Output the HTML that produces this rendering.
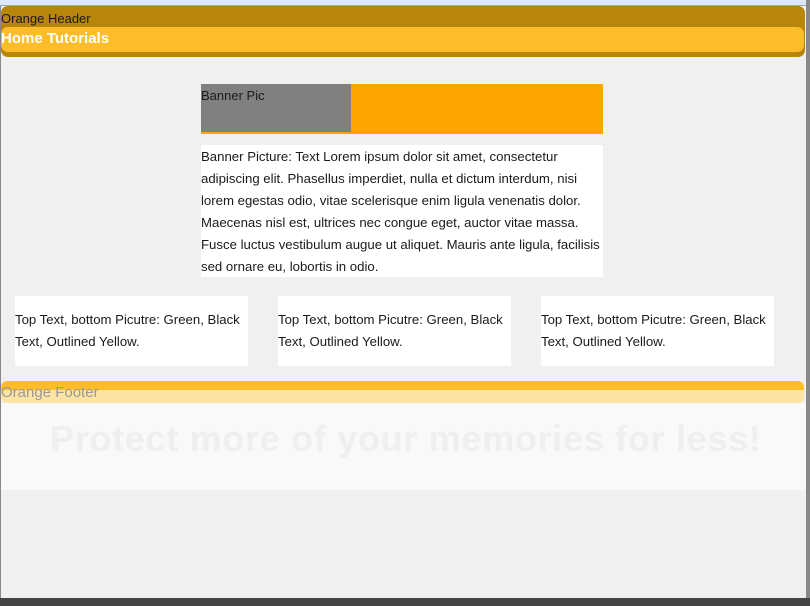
<!DOCTYPE html>
<html><head><style>
*{margin:0;padding:0;box-sizing:border-box}
body{width:810px;height:606px;background:#f0f0f0;font-family:"Liberation Sans",Arial,sans-serif;color:#1a1a1a;position:relative;overflow:hidden}
.a{position:absolute}
.p{font-size:13.2px;line-height:22px;background:#fff}
</style></head><body>
<div class="a" style="left:0;top:0;width:810px;height:5px;background:#dbe9f8"></div>
<div class="a" style="left:0;top:5px;width:806px;height:1px;background:#9aa"></div>
<div class="a" style="left:806px;top:0;width:4px;height:606px;background:#888"></div>
<div class="a" style="left:0;top:598px;width:810px;height:8px;background:#444"></div>
<div class="a" style="left:0;top:6px;width:1px;height:592px;background:#888"></div>

<div class="a" style="left:1px;top:6px;width:804px;height:51px;background:#b8860b;border-radius:7px"></div>
<div class="a" style="left:1px;top:11px;font-size:13px;color:#1a1a1a">Orange Header</div>
<div class="a" style="left:1px;top:27px;width:803px;height:25px;background:#fdbd2a;border-radius:7px"></div>
<div class="a" style="left:1px;top:30px;font-size:15px;font-weight:bold;color:#fff">Home Tutorials</div>

<div class="a" style="left:201px;top:84px;width:402px;height:50px;background:#ffa500"></div>
<div class="a" style="left:201px;top:84px;width:150px;height:48px;background:#808080;font-size:13px;padding-top:4px">Banner Pic</div>

<div class="a p" style="left:201px;top:145px;width:402px;height:132px;padding-top:1px">Banner Picture: Text Lorem ipsum dolor sit amet, consectetur adipiscing elit. Phasellus imperdiet, nulla et dictum interdum, nisi lorem egestas odio, vitae scelerisque enim ligula venenatis dolor. Maecenas nisl est, ultrices nec congue eget, auctor vitae massa. Fusce luctus vestibulum augue ut aliquet. Mauris ante ligula, facilisis sed ornare eu, lobortis in odio.</div>

<div class="a p" style="left:15px;top:296px;width:233px;height:70px;padding-top:13px">Top Text, bottom Picutre: Green, Black Text, Outlined Yellow.</div>
<div class="a p" style="left:278px;top:296px;width:233px;height:70px;padding-top:13px">Top Text, bottom Picutre: Green, Black Text, Outlined Yellow.</div>
<div class="a p" style="left:541px;top:296px;width:233px;height:70px;padding-top:13px">Top Text, bottom Picutre: Green, Black Text, Outlined Yellow.</div>

<div class="a" style="left:1px;top:381px;width:803px;height:22px;background:#fde4a4;border-radius:6px;overflow:hidden"><div style="height:9px;background:#fdbd2a"></div></div>
<div class="a" style="left:1px;top:384px;font-size:15px;color:#999">Orange Footer</div>
<div class="a" style="left:1px;top:403px;width:805px;height:87px;background:#f9f9f9"></div>
<div class="a" style="left:50px;top:418px;font-size:36px;font-weight:bold;color:#efefef;white-space:nowrap;letter-spacing:0.7px">Protect more of your memories for less!</div>
</body></html>
